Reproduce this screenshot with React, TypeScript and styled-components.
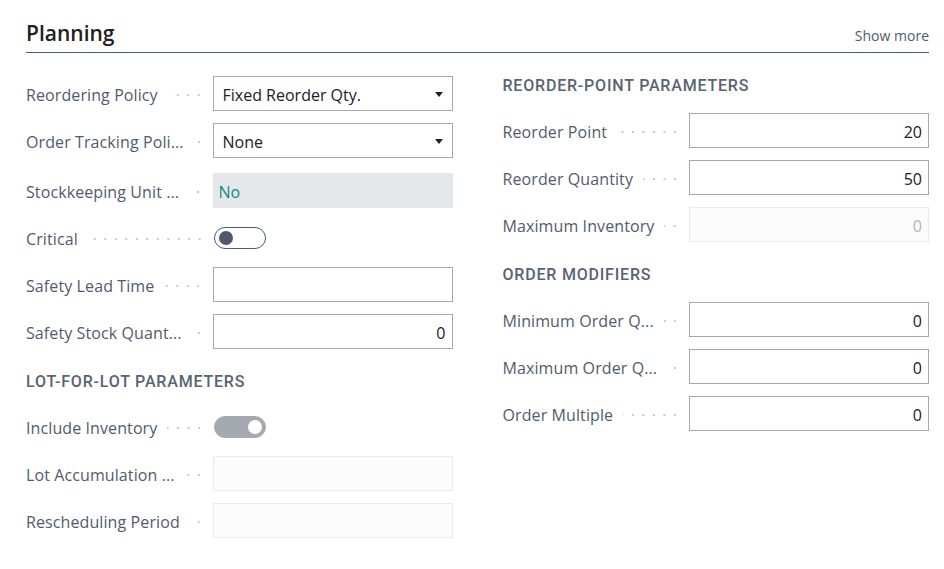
import React from 'react'
import styled, { createGlobalStyle } from 'styled-components'

const GlobalStyle = createGlobalStyle`
    body {
        margin: 0;
        background: #ffffff;
        font-family: 'Open Sans', 'Noto Sans', sans-serif;
    }
`

const StyledPage = styled.div`
    padding: 0 15px 0 26px;
`

const StyledHeader = styled.div`
    display: flex;
    justify-content: space-between;
    align-items: baseline;
    margin-top: 19px;
    height: 34px;
    border-bottom: 1px solid #505c6d;
    box-sizing: border-box;
`

const StyledTitle = styled.h1`
    margin: 0;
    font-size: 21px;
    font-weight: 600;
    line-height: 28px;
    color: #212121;
`

const StyledShowMore = styled.span`
    font-size: 14px;
    color: #505c6d;
    cursor: pointer;
`

const StyledColumns = styled.div`
    display: grid;
    grid-template-columns: 1fr 1fr;
    column-gap: 50px;
    margin-top: 23px;
`

const StyledColumn = styled.div`
    display: flex;
    flex-direction: column;
    gap: 12px;
`

const StyledGroupTitle = styled.div`
    height: 20px;
    line-height: 20px;
    margin: 11px 0 5px;
    font-family: Roboto, 'Open Sans', sans-serif;
    font-size: 16px;
    font-weight: 500;
    letter-spacing: 0.8px;
    color: #586373;
    text-transform: uppercase;
    &:first-child {
        margin-top: 0;
    }
`

const StyledRow = styled.div<{ $shift?: number }>`
    display: flex;
    align-items: center;
    height: 35px;
    margin-top: ${(p) => p.$shift || 0}px;
`

const StyledLabel = styled.div`
    flex: 1;
    display: flex;
    align-items: center;
    min-width: 0;
    padding-top: 3px;
    font-size: 16px;
    letter-spacing: 0.1px;
    color: #505c6d;
    white-space: nowrap;
`

const StyledLeader = styled.span`
    flex: 1;
    height: 2px;
    margin: 0 13px 0 10px;
    background-image: linear-gradient(to left, #c9c9c9 2px, transparent 2px);
    background-size: 10.5px 2px;
    background-position: right center;
    background-repeat: repeat-x;
`

const StyledInput = styled.div<{ $align?: 'left' | 'right'; $disabled?: boolean }>`
    width: 240px;
    height: 35px;
    box-sizing: border-box;
    display: flex;
    align-items: center;
    justify-content: space-between;
    padding: 2px ${(p) => (p.$align === 'right' ? '6px' : '9px')} 0 9px;
    border: 1px solid ${(p) => (p.$disabled ? '#ececec' : '#a8a8a8')};
    background: ${(p) => (p.$disabled ? '#fcfcfc' : '#ffffff')};
    font-size: 16px;
    color: ${(p) => (p.$disabled ? '#b3b3b3' : '#212121')};
    & > span {
        flex: 1;
        text-align: ${(p) => p.$align || 'left'};
    }
`

const StyledReadOnly = styled.div`
    width: 240px;
    height: 35px;
    box-sizing: border-box;
    display: flex;
    align-items: center;
    padding: 2px 6px 0;
    background: #e6e7e8;
    font-size: 16px;
    color: #0e8a8c;
`

const StyledToggle = styled.div<{ $on?: boolean }>`
    width: 52px;
    height: 22px;
    box-sizing: border-box;
    border-radius: 11px;
    display: flex;
    align-items: center;
    justify-content: ${(p) => (p.$on ? 'flex-end' : 'flex-start')};
    padding: 0 3px 0 4px;
    border: 1px solid ${(p) => (p.$on ? '#a5aab0' : '#505c6d')};
    background: ${(p) => (p.$on ? '#a5aab0' : '#ffffff')};
    margin-right: 187px;
    &::after {
        content: '';
        width: 14px;
        height: 14px;
        border-radius: 50%;
        background: ${(p) => (p.$on ? '#ffffff' : '#4f5b6c')};
    }
`

const Arrow = () => (
    <svg width="8" height="5" viewBox="0 0 8 5">
        <polygon points="0,0 8,0 4,5" fill="#212121" />
    </svg>
)

const Label = ({ text }: { text: string }) => (
    <StyledLabel>
        {text}
        <StyledLeader />
    </StyledLabel>
)

const SelectField = ({ label, value }: { label: string; value: string }) => (
    <StyledRow>
        <Label text={label} />
        <StyledInput>
            <span>{value}</span>
            <Arrow />
        </StyledInput>
    </StyledRow>
)

const NumberField = ({ label, value, disabled }: { label: string; value?: string; disabled?: boolean }) => (
    <StyledRow>
        <Label text={label} />
        <StyledInput $align="right" $disabled={disabled}>
            <span>{value}</span>
        </StyledInput>
    </StyledRow>
)

const ToggleField = ({ label, on }: { label: string; on?: boolean }) => (
    <StyledRow>
        <Label text={label} />
        <StyledToggle $on={on} />
    </StyledRow>
)

const App = () => {
    return (
        <StyledPage>
            <GlobalStyle />
            <StyledHeader>
                <StyledTitle>Planning</StyledTitle>
                <StyledShowMore>Show more</StyledShowMore>
            </StyledHeader>
            <StyledColumns>
                <StyledColumn>
                    <SelectField label="Reordering Policy" value="Fixed Reorder Qty." />
                    <SelectField label="Order Tracking Poli..." value="None" />
                    <StyledRow $shift={3}>
                        <Label text="Stockkeeping Unit ..." />
                        <StyledReadOnly>No</StyledReadOnly>
                    </StyledRow>
                    <ToggleField label="Critical" />
                    <NumberField label="Safety Lead Time" />
                    <NumberField label="Safety Stock Quant..." value="0" />
                    <StyledGroupTitle>Lot-for-Lot Parameters</StyledGroupTitle>
                    <ToggleField label="Include Inventory" on />
                    <NumberField label="Lot Accumulation ..." disabled />
                    <NumberField label="Rescheduling Period" disabled />
                </StyledColumn>
                <StyledColumn>
                    <StyledGroupTitle>Reorder-Point Parameters</StyledGroupTitle>
                    <NumberField label="Reorder Point" value="20" />
                    <NumberField label="Reorder Quantity" value="50" />
                    <NumberField label="Maximum Inventory" value="0" disabled />
                    <StyledGroupTitle>Order Modifiers</StyledGroupTitle>
                    <NumberField label="Minimum Order Q..." value="0" />
                    <NumberField label="Maximum Order Q..." value="0" />
                    <NumberField label="Order Multiple" value="0" />
                </StyledColumn>
            </StyledColumns>
        </StyledPage>
    )
}

export default App
